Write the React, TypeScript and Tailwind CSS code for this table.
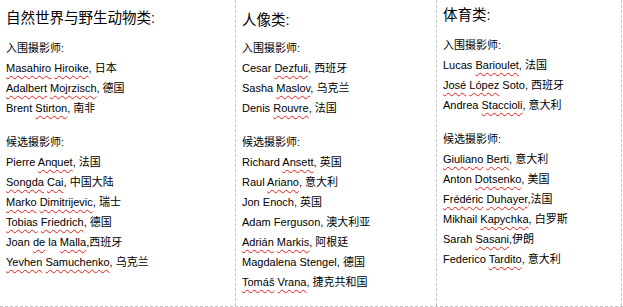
import React from 'react';

type Part = string | { w: string };

interface Group {
  label: string;
  people: Part[][];
}

interface Column {
  title: string;
  pad: string;
  titleGap: string;
  border: string;
  groups: Group[];
}

const u = (w: string): Part => ({ w });

const columns: Column[] = [
  {
    title: '自然世界与野生动物类:',
    pad: 'pt-[6px] pl-[6px]',
    titleGap: 'mt-[8px]',
    border: '',
    groups: [
      {
        label: '入围摄影师:',
        people: [
          [u('Masahiro'), ' ', u('Hiroike'), ', 日本'],
          [u('Adalbert'), ' ', u('Mojrzisch'), ', 德国'],
          ['Brent ', u('Stirton'), ', 南非'],
        ],
      },
      {
        label: '候选摄影师:',
        people: [
          ['Pierre ', u('Anquet'), ', 法国'],
          [u('Songda'), ' ', u('Cai'), ', 中国大陆'],
          [u('Marko'), ' ', u('Dimitrijevic'), ', 瑞士'],
          [u('Tobias'), ' ', u('Friedrich'), ', 德国'],
          ['Joan ', u('de'), ' la ', u('Malla'), ',西班牙'],
          [u('Yevhen'), ' ', u('Samuchenko'), ', 乌克兰'],
        ],
      },
    ],
  },
  {
    title: '人像类:',
    pad: 'pt-[8px] pl-[6px]',
    titleGap: 'mt-[6px]',
    border: 'border-l',
    groups: [
      {
        label: '入围摄影师:',
        people: [
          ['Cesar ', u('Dezfuli'), ', 西班牙'],
          ['Sasha ', u('Maslov'), ', 乌克兰'],
          ['Denis ', u('Rouvre'), ', 法国'],
        ],
      },
      {
        label: '候选摄影师:',
        people: [
          ['Richard ', u('Ansett'), ', 英国'],
          ['Raul ', u('Ariano'), ', 意大利'],
          ['Jon Enoch, 英国'],
          ['Adam Ferguson, 澳大利亚'],
          [u('Adrián'), ' ', u('Markis'), ', 阿根廷'],
          ['Magdalena Stengel, 德国'],
          [u('Tomáš'), ' ', u('Vrana'), ', 捷克共和国'],
        ],
      },
    ],
  },
  {
    title: '体育类:',
    pad: 'pt-[3px] pl-[6px]',
    titleGap: 'mt-[8px]',
    border: 'border-l border-r',
    groups: [
      {
        label: '入围摄影师:',
        people: [
          ['Lucas ', u('Barioulet'), ', 法国'],
          [u('José'), ' ', u('López'), ' Soto, 西班牙'],
          ['Andrea ', u('Staccioli'), ', 意大利'],
        ],
      },
      {
        label: '候选摄影师:',
        people: [
          [u('Giuliano'), ' ', u('Berti'), ', 意大利'],
          ['Anton ', u('Dotsenko'), ', 美国'],
          [u('Frédéric'), ' ', u('Duhayer'), ',法国'],
          ['Mikhail ', u('Kapychka'), ', 白罗斯'],
          ['Sarah ', u('Sasani'), ',伊朗'],
          ['Federico ', u('Tardito'), ', 意大利'],
        ],
      },
    ],
  },
];

const Line: React.FC<{ parts: Part[] }> = ({ parts }) => (
  <p className="leading-[20px] whitespace-nowrap">
    {parts.map((p, i) =>
      typeof p === 'string' ? (
        <span key={i}>{p}</span>
      ) : (
        <span
          key={i}
          className="underline decoration-wavy decoration-[#e0201c] decoration-1 underline-offset-[3px]"
        >
          {p.w}
        </span>
      )
    )}
  </p>
);

export default function App() {
  return (
    <div
      className="w-[623px] h-[307px] bg-white text-black text-[11px]"
      style={{ fontFamily: '"Liberation Sans", "Noto Sans CJK SC", sans-serif' }}
    >
      <div className="grid grid-cols-[235px_201px_186px] h-[307px] border-b border-dashed border-[#c4c4c4]">
        {columns.map((col) => (
          <div key={col.title} className={`${col.pad} ${col.border} border-dashed border-[#c4c4c4]`}>
            <h2 className="text-[14.5px] leading-[24px] font-normal whitespace-nowrap">{col.title}</h2>
            <div className={col.titleGap}>
              {col.groups.map((g, gi) => (
                <div key={g.label} className={gi > 0 ? 'mt-[14px]' : ''}>
                  <p className="leading-[20px]">{g.label}</p>
                  {g.people.map((parts, i) => (
                    <Line key={i} parts={parts} />
                  ))}
                </div>
              ))}
            </div>
          </div>
        ))}
      </div>
    </div>
  );
}
